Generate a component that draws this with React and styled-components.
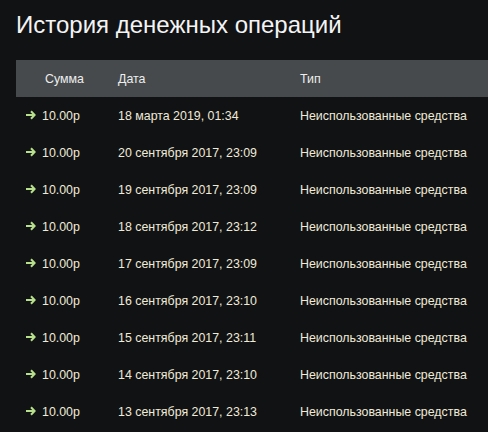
import React from "react";
import styled, { createGlobalStyle } from "styled-components";

const rows = [
  ["18 марта 2019, 01:34"],
  ["20 сентября 2017, 23:09"],
  ["19 сентября 2017, 23:09"],
  ["18 сентября 2017, 23:12"],
  ["17 сентября 2017, 23:09"],
  ["16 сентября 2017, 23:10"],
  ["15 сентября 2017, 23:11"],
  ["14 сентября 2017, 23:10"],
  ["13 сентября 2017, 23:13"],
].map(([date]) => ({ date, amount: "10.00р", type: "Неиспользованные средства" }));

const GlobalStyle = createGlobalStyle`
  html, body {
    margin: 0;
    background: #111214;
    overflow: hidden;
  }
  body {
    font-family: "Liberation Sans", Arial, sans-serif;
  }
`;

const Page = styled.div`
  padding: 8px 0 0 16px;
  width: 472px;
  height: 424px;
  overflow: hidden;
`;

const Title = styled.h1`
  margin: 0 0 19px;
  font-size: 24px;
  font-weight: normal;
  line-height: 33px;
  color: #f4f4f4;
`;

const Table = styled.table`
  width: 500px;
  border-collapse: collapse;
  table-layout: fixed;
  font-size: 12.4px;
`;

const Head = styled.th`
  height: 37px;
  padding: 0 10px;
  background: #464a4c;
  color: #eeeeee;
  font-weight: normal;
  text-align: left;
  &:first-child {
    padding-left: 29px;
  }
`;

const Cell = styled.td`
  height: 37px;
  padding: 0 10px;
  color: #f0ead8;
  white-space: nowrap;
`;

const Amount = styled.span`
  display: inline-flex;
  align-items: center;
  gap: 6px;
  svg {
    margin-top: -2px;
  }
`;

const Arrow = () => (
  <svg width="10" height="10" viewBox="0 0 10 10" fill="none" stroke="#b8e08c" strokeWidth="2">
    <path d="M0 5H8.5" />
    <path d="M5 1.2L8.6 5 5 8.8" />
  </svg>
);

export default function App() {
  return (
    <Page>
      <GlobalStyle />
      <Title>История денежных операций</Title>
      <Table>
        <colgroup>
          <col style={{ width: 92 }} />
          <col style={{ width: 182 }} />
          <col />
        </colgroup>
        <thead>
          <tr>
            <Head>Сумма</Head>
            <Head>Дата</Head>
            <Head>Тип</Head>
          </tr>
        </thead>
        <tbody>
          {rows.map((r, i) => (
            <tr key={i}>
              <Cell>
                <Amount>
                  <Arrow />
                  {r.amount}
                </Amount>
              </Cell>
              <Cell>{r.date}</Cell>
              <Cell>{r.type}</Cell>
            </tr>
          ))}
        </tbody>
      </Table>
    </Page>
  );
}
